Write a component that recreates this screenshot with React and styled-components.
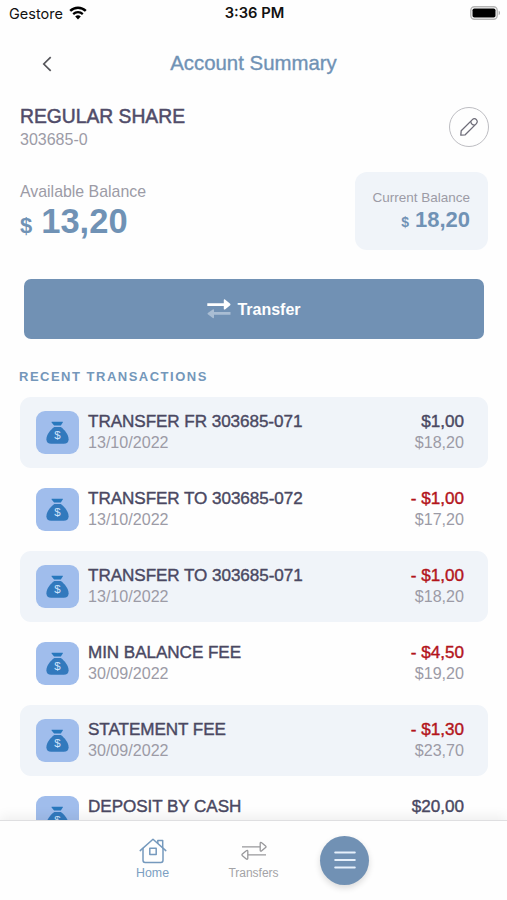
import React from 'react';
import styled, { createGlobalStyle } from 'styled-components';

const GlobalStyle = createGlobalStyle`
  * {
    box-sizing: border-box;
  }

  body {
    margin: 0;
    background: #fefefe;
    font-family: 'Liberation Sans', Arial, sans-serif;
  }

  button {
    border: 0;
    padding: 0;
    background: none;
    font-family: inherit;
  }
`;

const Screen = styled.div`
  display: flex;
  flex-direction: column;
  width: 507px;
  height: 900px;
  overflow: hidden;
`;

const StatusBar = styled.div`
  display: grid;
  grid-template-columns: 1fr auto 1fr;
  align-items: center;
  height: 28px;
  flex: none;
  padding: 0 6px 2px 9px;
  font-family: Inter, sans-serif;
  color: #111;
`;

const Carrier = styled.div`
  display: flex;
  align-items: center;
  gap: 6px;
  font-size: 14.5px;
`;

const Clock = styled.div`
  margin-right: 1px;
  font-size: 14.7px;
  font-weight: 600;
`;

const Battery = styled.svg`
  justify-self: end;
`;

const Header = styled.header`
  display: grid;
  grid-template-columns: 54px 1fr 54px;
  align-items: center;
  height: 70px;
  flex: none;
  padding: 0 20px;
`;

const BackButton = styled.button`
  display: flex;
  justify-content: center;
  padding-top: 2px;
`;

const Title = styled.h1`
  margin: 0;
  font-size: 20.4px;
  font-weight: 400;
  line-height: 24px;
  text-align: center;
  color: #7092b5;
  -webkit-text-stroke: 0.35px #7092b5;
`;

const Content = styled.main`
  flex: 1;
  min-height: 0;
  overflow: hidden;
  padding: 6px 19px 0 20px;
`;

const Account = styled.section`
  display: flex;
  justify-content: space-between;
  height: 68px;
`;

const AccountName = styled.h2`
  margin: 0;
  font-size: 19.3px;
  font-weight: 400;
  line-height: 25px;
  color: #504c69;
  -webkit-text-stroke: 0.5px #504c69;
`;

const AccountNumber = styled.div`
  font-size: 16px;
  line-height: 22px;
  color: #9c9ba6;
`;

const EditButton = styled.button`
  display: flex;
  align-items: center;
  justify-content: center;
  width: 40px;
  height: 40px;
  margin: 3px -1px 0 0;
  border: 1.5px solid #bdbdc2;
  border-radius: 50%;
`;

const Balances = styled.section`
  display: flex;
  justify-content: space-between;
  height: 78px;
`;

const Available = styled.div`
  padding-top: 10px;
`;

const Current = styled.div`
  width: 133px;
  height: 78px;
  padding: 16px 18px 0 0;
  border-radius: 12px;
  background: #f0f4f9;
  text-align: right;
`;

const BalanceLabel = styled.div`
  font-size: ${({ $small }) => ($small ? '13.5px' : '15.9px')};
  line-height: ${({ $small }) => ($small ? '20px' : '19px')};
  color: #9c9ba6;
  white-space: nowrap;
`;

const BalanceValue = styled.div`
  display: flex;
  align-items: baseline;
  justify-content: ${({ $small }) => ($small ? 'flex-end' : 'flex-start')};
  gap: ${({ $small }) => ($small ? '6px' : '9px')};
  font-size: ${({ $small }) => ($small ? '22px' : '34.5px')};
  font-weight: 700;
  line-height: ${({ $small }) => ($small ? '24px' : '40px')};
  color: #7092b5;
`;

const Currency = styled.span`
  font-size: ${({ $small }) => ($small ? '14px' : '22px')};
  font-weight: 700;
`;

const TransferButton = styled.button`
  display: flex;
  align-items: center;
  justify-content: center;
  gap: 6px;
  width: 460px;
  height: 60px;
  margin: 29px 0 0 4px;
  border-radius: 7px;
  background: #7191b4;
  color: #fff;
  font-size: 16px;
  font-weight: 700;
`;

const ButtonLabel = styled.span`
  padding-top: 2px;
`;

const SectionTitle = styled.h3`
  margin: 30px 0 12px -1px;
  font-size: 13px;
  font-weight: 700;
  line-height: 16px;
  letter-spacing: 1.5px;
  color: #7497ba;
`;

const List = styled.ul`
  display: flex;
  flex-direction: column;
  gap: 6px;
  margin: 0;
  padding: 0;
  list-style: none;
`;

const Row = styled.li`
  display: flex;
  align-items: flex-start;
  height: 71px;
  padding: 14px 24px 0 16px;
  border-radius: 11px;
  background: ${({ $shaded }) => ($shaded ? '#f0f4f9' : 'transparent')};
`;

const Badge = styled.div`
  display: flex;
  align-items: center;
  justify-content: center;
  width: 43px;
  height: 43px;
  margin-right: 9px;
  border-radius: 9px;
  background: #a0bdec;
`;

const Details = styled.div`
  flex: 1;
`;

const Amounts = styled.div`
  text-align: right;
`;

const Primary = styled.div`
  font-size: 17.1px;
  line-height: 21px;
  letter-spacing: ${({ $tight }) => ($tight ? '-0.06px' : 'normal')};
  color: ${({ $negative }) => ($negative ? '#b3141b' : '#4a4862')};
  -webkit-text-stroke: 0.4px currentColor;
`;

const Secondary = styled.div`
  font-size: 16.1px;
  line-height: 21px;
  color: #9c9ba6;
`;

const TabBar = styled.nav`
  display: flex;
  position: relative;
  height: 80px;
  flex: none;
  padding: 15px 0 0 102px;
  border-top: 1px solid #dfdfe1;
  background: #fefefe;
  box-shadow: 0 -3px 12px rgba(0, 0, 0, 0.07);
`;

const Tab = styled.button`
  display: flex;
  flex-direction: column;
  align-items: center;
  gap: 1px;
  width: 101px;
  height: 50px;
  padding-top: 2px;
  font-size: ${({ $active }) => ($active ? '12.4px' : '12px')};
  line-height: 16px;
  color: ${({ $active }) => ($active ? '#7c9fc2' : '#a3a3a6')};
`;

const MenuButton = styled.button`
  display: flex;
  align-items: center;
  justify-content: center;
  width: 49px;
  height: 49px;
  margin-left: 16px;
  padding-bottom: 2px;
  border-radius: 50%;
  background: #7191b4;
  box-shadow: 0 3px 6px rgba(0, 0, 0, 0.14);
`;

const WifiIcon = () => (
  <svg width="18" height="14" viewBox="0 0 18 14" fill="none">
    <path d="M1.2 4.8a11.2 11.2 0 0 1 15.6 0" stroke="#000" strokeWidth="2.5" />
    <path d="M4.2 8.1a7 7 0 0 1 9.6 0" stroke="#000" strokeWidth="2.2" />
    <path d="M6.2 10.5a4 4 0 0 1 5.6 0L9 13.4z" fill="#000" />
  </svg>
);

const BackIcon = () => (
  <svg width="10" height="16" viewBox="0 0 10 16" fill="none">
    <path d="M8.7 1.2L1.8 8l6.9 6.8" stroke="#55555a" strokeWidth="1.7" />
  </svg>
);

const PencilIcon = () => (
  <svg width="20" height="20" viewBox="0 0 20 20" fill="none" stroke="#6d6c78" strokeWidth="1.3" strokeLinejoin="round">
    <path d="M1.8 18.2l.4-4.4L13.4 2.6a2.6 2.6 0 0 1 4 4L6.2 17.8z" />
    <path d="M11.8 4.2a4.3 4.3 0 0 0 4 4" />
  </svg>
);

const ArrowsIcon = () => (
  <svg width="24" height="20" viewBox="0 0 24 20">
    <path d="M.3 4.2h16.5V.9c0-.6.7-.9 1.2-.5l5.2 4.4c.4.4.4 1 0 1.4L18 10.4c-.5.4-1.2.1-1.2-.5V7.1H.3z" fill="#fff" />
    <path d="M23.5 13.1H7v-2.2c0-.6-.7-.8-1.2-.4L.8 14c-.4.4-.4 1 0 1.3l5 3.8c.5.4 1.2.1 1.2-.5v-2.8h16.5z" fill="#a9bdd3" />
  </svg>
);

const MoneyBagIcon = () => (
  <svg width="23" height="24" viewBox="0 0 23 24">
    <path d="M6.1.7h10.3c.5 0 .7.4.4.9l-2 2.9H8.1l-2.5-3c-.3-.4-.1-.8.5-.8z" fill="#2878bd" />
    <path d="M8.3 6h6.5c3.8 2.7 7.8 7.7 7.8 12.2 0 3.1-1.8 4.6-4.9 4.6H5.2C2.2 22.8.4 21.3.4 18.2.4 13.7 4.5 8.7 8.3 6z" fill="#3279bd" />
    <text x="11.4" y="18.4" textAnchor="middle" fontFamily="Liberation Sans, Arial, sans-serif" fontSize="11.5" fill="#cee2fa">$</text>
  </svg>
);

const HomeIcon = () => (
  <svg width="28" height="26" viewBox="0 0 28 26" fill="none" stroke="#7599bd" strokeWidth="1.5" strokeLinecap="round" strokeLinejoin="round">
    <path d="M1.2 12.6L14 1.2l12.8 11.4" />
    <path d="M4 10.5v11.8c0 1.4.8 2.2 2.1 2.2h15.8c1.3 0 2.1-.8 2.1-2.2V10.5" />
    <path d="M18.8 5.3V2.6h4.9v7M10.8 10.2h6.4v6.4h-6.4z" />
  </svg>
);

const TransfersIcon = () => (
  <svg width="26" height="26" viewBox="0 0 26 26" fill="none" stroke="#98989b" strokeWidth="1.3" strokeLinejoin="round">
    <path d="M1 8.8h18M7 16.8h18" />
    <path d="M19.2 5.3c0-1.1.8-1.3 1.5-.6l3.9 3.2c.6.5.6 1.2 0 1.7l-3.9 3.2c-.7.7-1.5.4-1.5-.6z" />
    <path d="M6.8 13.3c0-1.1-.8-1.3-1.5-.6L1.4 16c-.6.5-.6 1.2 0 1.7l3.9 3.2c.7.6 1.5.4 1.5-.6z" />
  </svg>
);

const MenuIcon = () => (
  <svg width="24" height="20" viewBox="0 0 24 20" fill="none" stroke="#e6f0fb" strokeWidth="2" strokeLinecap="round">
    <path d="M2.2 2.5h19.6M2.2 10h19.6M2.2 17.5h19.6" />
  </svg>
);

const transactions = [
  { id: 1, name: 'TRANSFER FR 303685-071', date: '13/10/2022', amount: '$1,00', balance: '$18,20' },
  { id: 2, name: 'TRANSFER TO 303685-072', date: '13/10/2022', amount: '- $1,00', balance: '$17,20' },
  { id: 3, name: 'TRANSFER TO 303685-071', date: '13/10/2022', amount: '- $1,00', balance: '$18,20' },
  { id: 4, name: 'MIN BALANCE FEE', date: '30/09/2022', amount: '- $4,50', balance: '$19,20' },
  { id: 5, name: 'STATEMENT FEE', date: '30/09/2022', amount: '- $1,30', balance: '$23,70' },
  { id: 6, name: 'DEPOSIT BY CASH', amount: '$20,00' }
];

const App = () => (
  <Screen>
    <GlobalStyle />
    <StatusBar>
      <Carrier>
        Gestore
        <WifiIcon />
      </Carrier>
      <Clock>3:36 PM</Clock>
      <Battery width="31" height="14" viewBox="0 0 31 14">
        <rect x=".8" y=".8" width="26.4" height="12.4" rx="3.6" fill="#fff" stroke="#b5b5b5" strokeWidth="1.4" />
        <rect x="2.5" y="2.5" width="23" height="9" rx="1.8" fill="#000" />
        <path d="M28.7 4.8c1.7.6 1.7 3.8 0 4.4z" fill="#a8a8a8" />
      </Battery>
    </StatusBar>
    <Header>
      <BackButton aria-label="Back"><BackIcon /></BackButton>
      <Title>Account Summary</Title>
    </Header>
    <Content>
      <Account>
        <div>
          <AccountName>REGULAR SHARE</AccountName>
          <AccountNumber>303685-0</AccountNumber>
        </div>
        <EditButton aria-label="Edit"><PencilIcon /></EditButton>
      </Account>
      <Balances>
        <Available>
          <BalanceLabel>Available Balance</BalanceLabel>
          <BalanceValue><Currency>$</Currency>13,20</BalanceValue>
        </Available>
        <Current>
          <BalanceLabel $small>Current Balance</BalanceLabel>
          <BalanceValue $small><Currency $small>$</Currency>18,20</BalanceValue>
        </Current>
      </Balances>
      <TransferButton>
        <ArrowsIcon />
        <ButtonLabel>Transfer</ButtonLabel>
      </TransferButton>
      <SectionTitle>RECENT TRANSACTIONS</SectionTitle>
      <List>
        {transactions.map((item, i) =>
          <Row key={item.id} $shaded={i % 2 === 0}>
            <Badge><MoneyBagIcon /></Badge>
            <Details>
              <Primary $tight>{item.name}</Primary>
              <Secondary>{item.date}</Secondary>
            </Details>
            <Amounts>
              <Primary $negative={item.amount.startsWith('-')}>{item.amount}</Primary>
              <Secondary>{item.balance}</Secondary>
            </Amounts>
          </Row>
        )}
      </List>
    </Content>
    <TabBar>
      <Tab $active>
        <HomeIcon />
        Home
      </Tab>
      <Tab>
        <TransfersIcon />
        Transfers
      </Tab>
      <MenuButton aria-label="Menu"><MenuIcon /></MenuButton>
    </TabBar>
  </Screen>
);

export default App;
